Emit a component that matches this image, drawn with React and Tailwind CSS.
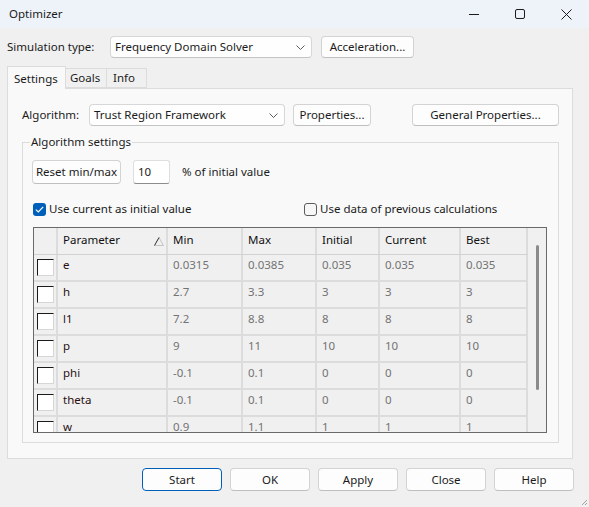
import React from "react";

const F = { fontFamily: '"Noto Sans", "Open Sans", sans-serif' };

function Chevron() {
  return (
    <svg width="9" height="5" viewBox="0 0 9 5" className="shrink-0">
      <path d="M0.5 0.5 L4.5 4.5 L8.5 0.5" fill="none" stroke="#5f5f5f" strokeWidth="1" />
    </svg>
  );
}

function Btn({ children, className = "" }) {
  return (
    <div
      className={
        "flex items-center justify-center rounded-[4px] border border-[#d3d3d3] border-b-[#bfbfbf] bg-[#fdfdfd] text-[11.5px] text-[#1b1b1b] " +
        className
      }
    >
      {children}
    </div>
  );
}

function Combo({ text, className = "" }) {
  return (
    <div
      className={
        "flex items-center justify-between rounded-[4px] border border-[#d7d7d7] border-b-[#c4c4c4] bg-[#fefefe] pl-[4px] pr-[6px] text-[11.5px] text-[#1b1b1b] " +
        className
      }
    >
      <span>{text}</span>
      <Chevron />
    </div>
  );
}

const cols = [
  { w: "w-[24px]" },
  { w: "w-[110px]" },
  { w: "w-[75px]" },
  { w: "w-[74px]" },
  { w: "w-[63px]" },
  { w: "w-[81px]" },
  { w: "w-[67px]" },
];

const headers = ["", "Parameter", "Min", "Max", "Initial", "Current", "Best"];

const rows = [
  ["e", "0.0315", "0.0385", "0.035", "0.035", "0.035"],
  ["h", "2.7", "3.3", "3", "3", "3"],
  ["l1", "7.2", "8.8", "8", "8", "8"],
  ["p", "9", "11", "10", "10", "10"],
  ["phi", "-0.1", "0.1", "0", "0", "0"],
  ["theta", "-0.1", "0.1", "0", "0", "0"],
  ["w", "0.9", "1.1", "1", "1", "1"],
];

function SortTri() {
  return (
    <svg width="10" height="9" viewBox="0 0 10 9" className="mt-[6px]">
      <path d="M5 0.5 L9.5 8.5 L0.5 8.5 Z" fill="none" stroke="#c4c4c4" strokeWidth="1" />
      <path d="M5 0.5 L0.5 8.5" fill="none" stroke="#3a3a3a" strokeWidth="1" />
    </svg>
  );
}

function RowBox() {
  return (
    <div className="h-[17px] w-[17px] border border-t-[#1a1a1a] border-l-[#1a1a1a] border-r-[#d6d6d6] border-b-[#d6d6d6] bg-white" />
  );
}

function Table() {
  return (
    <div className="ml-[10px] flex h-[206px] w-[514px] overflow-hidden border border-[#6a6a6a] bg-[#f0f0f0]">
      <div className="flex w-[494px] flex-col">
        <div className="flex h-[27px] shrink-0 border-b border-[#d2d2d2]">
          {headers.map((h, i) => (
            <div
              key={i}
              className={
                cols[i].w +
                " flex shrink-0 items-start justify-between border-r-2 border-[#dcdcdc] pl-[5px] pr-[2px] pt-[3px] text-[11.5px] text-[#111]"
              }
            >
              <span>{h}</span>
              {i === 1 && <SortTri />}
            </div>
          ))}
        </div>
        {rows.map((r, ri) => (
          <div key={ri} className="flex h-[27px] shrink-0 border-b-2 border-[#dcdcdc]">
            <div className={cols[0].w + " flex shrink-0 justify-center border-r-2 border-[#dcdcdc] pt-[4px]"}>
              <RowBox />
            </div>
            {r.map((v, ci) => (
              <div
                key={ci}
                className={
                  cols[ci + 1].w +
                  " shrink-0 border-r-2 border-[#dcdcdc] pl-[5px] pt-[1px] text-[11.5px] " +
                  (ci === 0 ? "text-[#2a1010]" : "text-[#737373]")
                }
              >
                {v}
              </div>
            ))}
          </div>
        ))}
      </div>
      <div className="flex w-[18px] shrink-0 justify-center pt-[17px]">
        <div className="h-[145px] w-[3px] rounded-full bg-[#8a8a8a]" />
      </div>
    </div>
  );
}

export default function App() {
  return (
    <div
      style={F}
      className="relative flex h-[507px] w-[589px] flex-col overflow-hidden bg-[#f0f0f0] text-[11.5px] text-[#1b1b1b]"
    >
      {/* Title bar */}
      <div className="flex h-[28px] shrink-0 items-center bg-[#eef3f9]">
        <span className="ml-[9px] text-[11.5px] text-[#1b1b1b]">Optimizer</span>
        <div className="ml-auto flex h-full items-center">
          <div className="flex h-full w-[46px] items-center justify-center">
            <svg width="10" height="10" viewBox="0 0 10 10">
              <path d="M0 5.5 H10" stroke="#1b1b1b" strokeWidth="1" />
            </svg>
          </div>
          <div className="flex h-full w-[46px] items-center justify-center">
            <svg width="10" height="10" viewBox="0 0 10 10">
              <rect x="0.5" y="0.5" width="9" height="9" rx="1.5" fill="none" stroke="#1b1b1b" strokeWidth="1" />
            </svg>
          </div>
          <div className="flex h-full w-[46px] items-center justify-center">
            <svg width="11" height="11" viewBox="0 0 11 11">
              <path d="M0.5 0.5 L10.5 10.5 M10.5 0.5 L0.5 10.5" stroke="#1b1b1b" strokeWidth="1" />
            </svg>
          </div>
        </div>
      </div>

      <div className="flex flex-col px-[7px]">
        {/* Simulation type row */}
        <div className="mt-[8px] flex h-[22px] items-stretch">
          <div className="flex w-[103px] items-center">Simulation type:</div>
          <Combo text="Frequency Domain Solver" className="w-[202px]" />
          <Btn className="ml-[9px] w-[93px]">Acceleration...</Btn>
        </div>

        {/* Tabs */}
        <div className="relative z-10 mt-[8px] flex items-end">
          <div className="-mb-px flex h-[23px] w-[59px] items-start border border-b-0 border-[#dcdcdc] bg-[#f9f9f9] pl-[6px] pt-[3px]">
            Settings
          </div>
          <div className="flex h-[20px] w-[41px] items-center border border-l-0 border-[#dcdcdc] bg-[#f0f0f0] pl-[4px]">
            Goals
          </div>
          <div className="flex h-[20px] w-[40px] items-center border border-l-0 border-[#dcdcdc] bg-[#f0f0f0] pl-[6px]">
            Info
          </div>
        </div>

        {/* Panel */}
        <div className="flex h-[371px] w-[566px] flex-col border border-[#dcdcdc] bg-[#f9f9f9] pl-[14px] pr-[13px] pt-[15px]">
          <div className="flex h-[22px] items-stretch">
            <div className="flex w-[67px] items-center">Algorithm:</div>
            <Combo text="Trust Region Framework" className="w-[196px]" />
            <Btn className="ml-[8px] w-[78px]">Properties...</Btn>
            <Btn className="ml-auto w-[147px]">General Properties...</Btn>
          </div>

          <fieldset className="mt-[8px] h-[309px] border border-[#dcdcdc]">
            <legend className="ml-[7px] px-[1px] text-[11.5px] leading-[16px]">Algorithm settings</legend>
            <div className="mt-[10px] flex h-[24px] items-stretch pl-[9px]">
              <Btn className="w-[89px]">Reset min/max</Btn>
              <div className="ml-[12px] flex w-[37px] items-center rounded-[3px] border border-[#dedede] border-b-[#8c8c8c] bg-white pl-[4px]">
                10
              </div>
              <div className="ml-[12px] flex items-center">% of initial value</div>
            </div>

            <div className="mt-[18px] flex h-[14px] items-center pl-[10px]">
              <div className="flex w-[271px] items-center">
                <div className="flex h-[13px] w-[13px] items-center justify-center rounded-[3px] bg-[#005fb8]">
                  <svg width="9" height="7" viewBox="0 0 9 7">
                    <path d="M0.8 3.6 L3.3 6 L8.2 0.8" fill="none" stroke="white" strokeWidth="1.2" />
                  </svg>
                </div>
                <span className="ml-[3px]">Use current as initial value</span>
              </div>
              <div className="flex items-center">
                <div className="h-[13px] w-[13px] rounded-[3px] border border-[#5c5c5c] bg-[#f7f7f7]" />
                <span className="ml-[3px]">Use data of previous calculations</span>
              </div>
            </div>

            <div className="mt-[11px]">
              <Table />
            </div>
          </fieldset>
        </div>

        {/* Bottom buttons */}
        <div className="mt-[9px] flex justify-end gap-[8px] pr-[8px]">
          <div className="flex h-[23px] w-[80px] items-center justify-center rounded-[4px] border border-[#005fb8] bg-[#fdfdfd]">
            Start
          </div>
          <Btn className="h-[23px] w-[80px]">OK</Btn>
          <Btn className="h-[23px] w-[80px]">Apply</Btn>
          <Btn className="h-[23px] w-[80px]">Close</Btn>
          <Btn className="h-[23px] w-[80px]">Help</Btn>
        </div>
      </div>

      {/* Resize grip */}
      <svg className="absolute bottom-[1px] right-[1px]" width="7" height="7" viewBox="0 0 7 7">
        <path d="M6 1 L1 6 M6 4 L4 6" stroke="#a0a0a0" strokeWidth="1" />
      </svg>
    </div>
  );
}
